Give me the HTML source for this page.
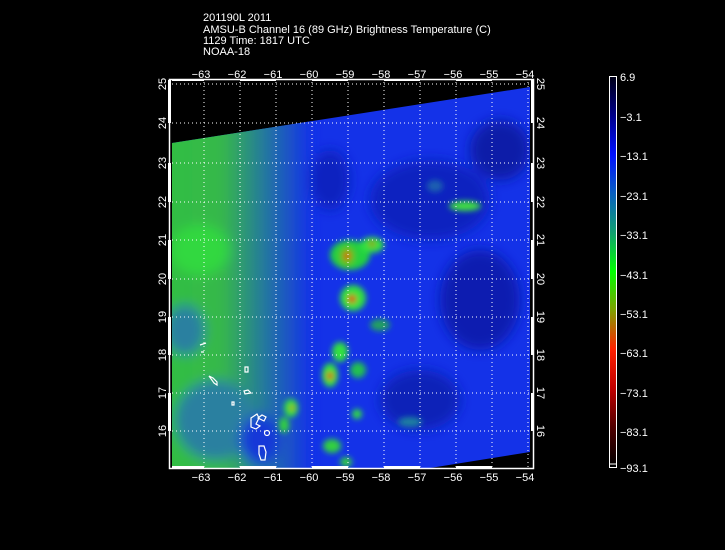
<!DOCTYPE html>
<html><head><meta charset="utf-8"><style>
html,body{margin:0;padding:0;background:#000;width:725px;height:550px;overflow:hidden}
svg{display:block}
text{font-family:"Liberation Sans",sans-serif;fill:#fff;font-size:11px}
</style></head><body>
<svg width="725" height="550" viewBox="0 0 725 550" xmlns="http://www.w3.org/2000/svg">
<defs>
<filter id="b" x="-20%" y="-20%" width="140%" height="140%"><feGaussianBlur stdDeviation="6"/></filter>
<filter id="b2" x="-50%" y="-50%" width="200%" height="200%"><feGaussianBlur stdDeviation="3"/></filter>
<linearGradient id="lg" x1="0" y1="0" x2="1" y2="0">
<stop offset="0" stop-color="#30c040"/><stop offset="0.45" stop-color="#36b84a"/><stop offset="0.75" stop-color="#2270a8"/><stop offset="1" stop-color="#1432e8"/></linearGradient>
<linearGradient id="cb" x1="0" y1="0" x2="0" y2="1">
<stop offset="0" stop-color="#000018"/><stop offset="0.1" stop-color="#00008a"/><stop offset="0.2" stop-color="#0010ff"/><stop offset="0.3" stop-color="#0860c0"/><stop offset="0.4" stop-color="#10a070"/><stop offset="0.5" stop-color="#00ff00"/><stop offset="0.6" stop-color="#80a000"/><stop offset="0.7" stop-color="#ff2000"/><stop offset="0.8" stop-color="#c00000"/><stop offset="0.9" stop-color="#500000"/><stop offset="1" stop-color="#000"/></linearGradient>
<clipPath id="sw"><polygon points="172,143 530,87 530,452 430,468 172,468"/></clipPath>
</defs>
<text x="203" y="21">201190L 2011</text>
<text x="203" y="33">AMSU-B Channel 16 (89 GHz) Brightness Temperature (C)</text>
<text x="203" y="44">1129 Time: 1817 UTC</text>
<text x="203" y="55">NOAA-18</text>

<g clip-path="url(#sw)">
<rect x="172" y="80" width="358" height="390" fill="#1432e8"/>
<g filter="url(#b)">
<rect x="150" y="80" width="160" height="400" fill="url(#lg)"/>
<ellipse cx="200" cy="250" rx="30" ry="25" fill="#30d840"/>
<ellipse cx="185" cy="330" rx="20" ry="25" fill="#2a80a0"/>
<ellipse cx="215" cy="420" rx="40" ry="40" fill="#2a80a0"/>
<ellipse cx="260" cy="440" rx="20" ry="25" fill="#1838d8"/>
<ellipse cx="430" cy="200" rx="60" ry="40" fill="#0c22c0"/>
<ellipse cx="480" cy="300" rx="40" ry="50" fill="#0a1cb0"/>
<ellipse cx="420" cy="400" rx="40" ry="30" fill="#0c20b8"/>
<ellipse cx="500" cy="150" rx="30" ry="30" fill="#0a1aa8"/>
<ellipse cx="330" cy="180" rx="20" ry="30" fill="#0c22c0"/>
</g>
<g filter="url(#b2)">
<ellipse cx="350" cy="255" rx="20" ry="15" fill="#20d040"/>
<ellipse cx="347" cy="256" rx="8" ry="10" fill="#60c020"/>
<ellipse cx="347" cy="256" rx="3" ry="4" fill="#e03000"/>
<ellipse cx="372" cy="245" rx="12" ry="8" fill="#30e040"/>
<ellipse cx="372" cy="244" rx="3" ry="3" fill="#a08000"/>
<ellipse cx="353" cy="298" rx="13" ry="13" fill="#30e040"/>
<ellipse cx="352" cy="299" rx="4" ry="4" fill="#e03000"/>
<ellipse cx="465" cy="206" rx="16" ry="5" fill="#40e040"/>
<ellipse cx="380" cy="325" rx="10" ry="6" fill="#20a060"/>
<ellipse cx="340" cy="352" rx="8" ry="10" fill="#30e040"/>
<ellipse cx="330" cy="375" rx="8" ry="12" fill="#30e040"/>
<ellipse cx="330" cy="376" rx="3" ry="4" fill="#e03000"/>
<ellipse cx="358" cy="370" rx="8" ry="8" fill="#20c050"/>
<ellipse cx="291" cy="408" rx="7" ry="9" fill="#30e040"/>
<ellipse cx="292" cy="408" rx="2" ry="2" fill="#e03000"/>
<ellipse cx="284" cy="425" rx="5" ry="8" fill="#30d040"/>
<ellipse cx="357" cy="414" rx="5" ry="5" fill="#30e040"/>
<ellipse cx="332" cy="446" rx="9" ry="7" fill="#30d040"/>
<ellipse cx="346" cy="462" rx="6" ry="5" fill="#30d040"/>
<ellipse cx="410" cy="422" rx="12" ry="5" fill="#1a80a0"/>
<ellipse cx="435" cy="186" rx="8" ry="6" fill="#1a60b0"/>
</g>
</g>
<g fill="none" stroke="#fff" stroke-width="1.2">
<path d="M251,418 l6,-4 2,4 -3,6 4,2 -4,3 -5,-2 z M258,418 l4,-3 4,2 -2,4 z"/>
<circle cx="267" cy="433" r="2.5"/>
<path d="M259,446 l5,0 2,6 -1,8 -4,0 -2,-6 z"/>
<path d="M245,367 l3,0 0,5 -3,0 z M244,391 l4,-1 3,3 -6,1 z M232,402 l2,0 0,3 -2,0 z"/>
<path d="M209,376 l4,2 4,4 0,3 -3,-2 z M200,345 l6,-2 M201,352 l3,0"/>
</g>
<g stroke="#fff" stroke-width="1" stroke-dasharray="1,3">
<line x1="204" y1="82" x2="204" y2="467"/><line x1="240" y1="82" x2="240" y2="467"/><line x1="276" y1="82" x2="276" y2="467"/><line x1="312" y1="82" x2="312" y2="467"/><line x1="348" y1="82" x2="348" y2="467"/><line x1="384" y1="82" x2="384" y2="467"/><line x1="420" y1="82" x2="420" y2="467"/><line x1="456" y1="82" x2="456" y2="467"/><line x1="492" y1="82" x2="492" y2="467"/><line x1="528" y1="82" x2="528" y2="467"/>
<line x1="172" y1="84" x2="530" y2="84"/><line x1="172" y1="123" x2="530" y2="123"/><line x1="172" y1="163" x2="530" y2="163"/><line x1="172" y1="202" x2="530" y2="202"/><line x1="172" y1="240" x2="530" y2="240"/><line x1="172" y1="279" x2="530" y2="279"/><line x1="172" y1="317" x2="530" y2="317"/><line x1="172" y1="355" x2="530" y2="355"/><line x1="172" y1="393" x2="530" y2="393"/><line x1="172" y1="431" x2="530" y2="431"/>
</g>
<rect x="169.5" y="79.5" width="364" height="389" fill="none" stroke="#fff" stroke-width="1.5"/>
<g fill="#fff">
<rect x="168" y="80" width="3" height="43"/><rect x="168" y="163" width="3" height="39"/><rect x="168" y="240" width="3" height="39"/><rect x="168" y="317" width="3" height="38"/><rect x="168" y="393" width="3" height="38"/>
<rect x="531" y="80" width="3" height="43"/><rect x="531" y="163" width="3" height="39"/><rect x="531" y="240" width="3" height="39"/><rect x="531" y="317" width="3" height="38"/><rect x="531" y="393" width="3" height="38"/>
<rect x="172" y="466" width="32" height="3"/><rect x="240" y="466" width="36" height="3"/><rect x="312" y="466" width="36" height="3"/><rect x="384" y="466" width="36" height="3"/><rect x="456" y="466" width="36" height="3"/>
<rect x="172" y="79" width="32" height="2"/><rect x="240" y="79" width="36" height="2"/><rect x="312" y="79" width="36" height="2"/><rect x="384" y="79" width="36" height="2"/><rect x="456" y="79" width="36" height="2"/>
</g>
<g text-anchor="middle" font-size="11">
<text x="201" y="78">−63</text><text x="237" y="78">−62</text><text x="273" y="78">−61</text><text x="309" y="78">−60</text><text x="345" y="78">−59</text><text x="381" y="78">−58</text><text x="417" y="78">−57</text><text x="453" y="78">−56</text><text x="489" y="78">−55</text><text x="525" y="78">−54</text>
<text x="201" y="481">−63</text><text x="237" y="481">−62</text><text x="273" y="481">−61</text><text x="309" y="481">−60</text><text x="345" y="481">−59</text><text x="381" y="481">−58</text><text x="417" y="481">−57</text><text x="453" y="481">−56</text><text x="489" y="481">−55</text><text x="525" y="481">−54</text>
</g>
<g text-anchor="middle">
<text transform="translate(166,84) rotate(-90)">25</text><text transform="translate(166,123) rotate(-90)">24</text><text transform="translate(166,163) rotate(-90)">23</text><text transform="translate(166,202) rotate(-90)">22</text><text transform="translate(166,240) rotate(-90)">21</text><text transform="translate(166,279) rotate(-90)">20</text><text transform="translate(166,317) rotate(-90)">19</text><text transform="translate(166,355) rotate(-90)">18</text><text transform="translate(166,393) rotate(-90)">17</text><text transform="translate(166,431) rotate(-90)">16</text>
<text transform="translate(537,84) rotate(90)">25</text><text transform="translate(537,123) rotate(90)">24</text><text transform="translate(537,163) rotate(90)">23</text><text transform="translate(537,202) rotate(90)">22</text><text transform="translate(537,240) rotate(90)">21</text><text transform="translate(537,279) rotate(90)">20</text><text transform="translate(537,317) rotate(90)">19</text><text transform="translate(537,355) rotate(90)">18</text><text transform="translate(537,393) rotate(90)">17</text><text transform="translate(537,431) rotate(90)">16</text>
</g>
<rect x="610" y="77" width="6" height="389" fill="url(#cb)"/>
<rect x="609.5" y="76.5" width="7" height="391" fill="none" stroke="#fff"/>
<line x1="609" y1="464" x2="617" y2="464" stroke="#fff"/>
<g font-size="10">
<text x="620" y="81">6.9</text><text x="620" y="121">−3.1</text><text x="620" y="160">−13.1</text><text x="620" y="200">−23.1</text><text x="620" y="239">−33.1</text><text x="620" y="279">−43.1</text><text x="620" y="318">−53.1</text><text x="620" y="357">−63.1</text><text x="620" y="397">−73.1</text><text x="620" y="436">−83.1</text><text x="620" y="472">−93.1</text>
</g>
</svg>
</body></html>
